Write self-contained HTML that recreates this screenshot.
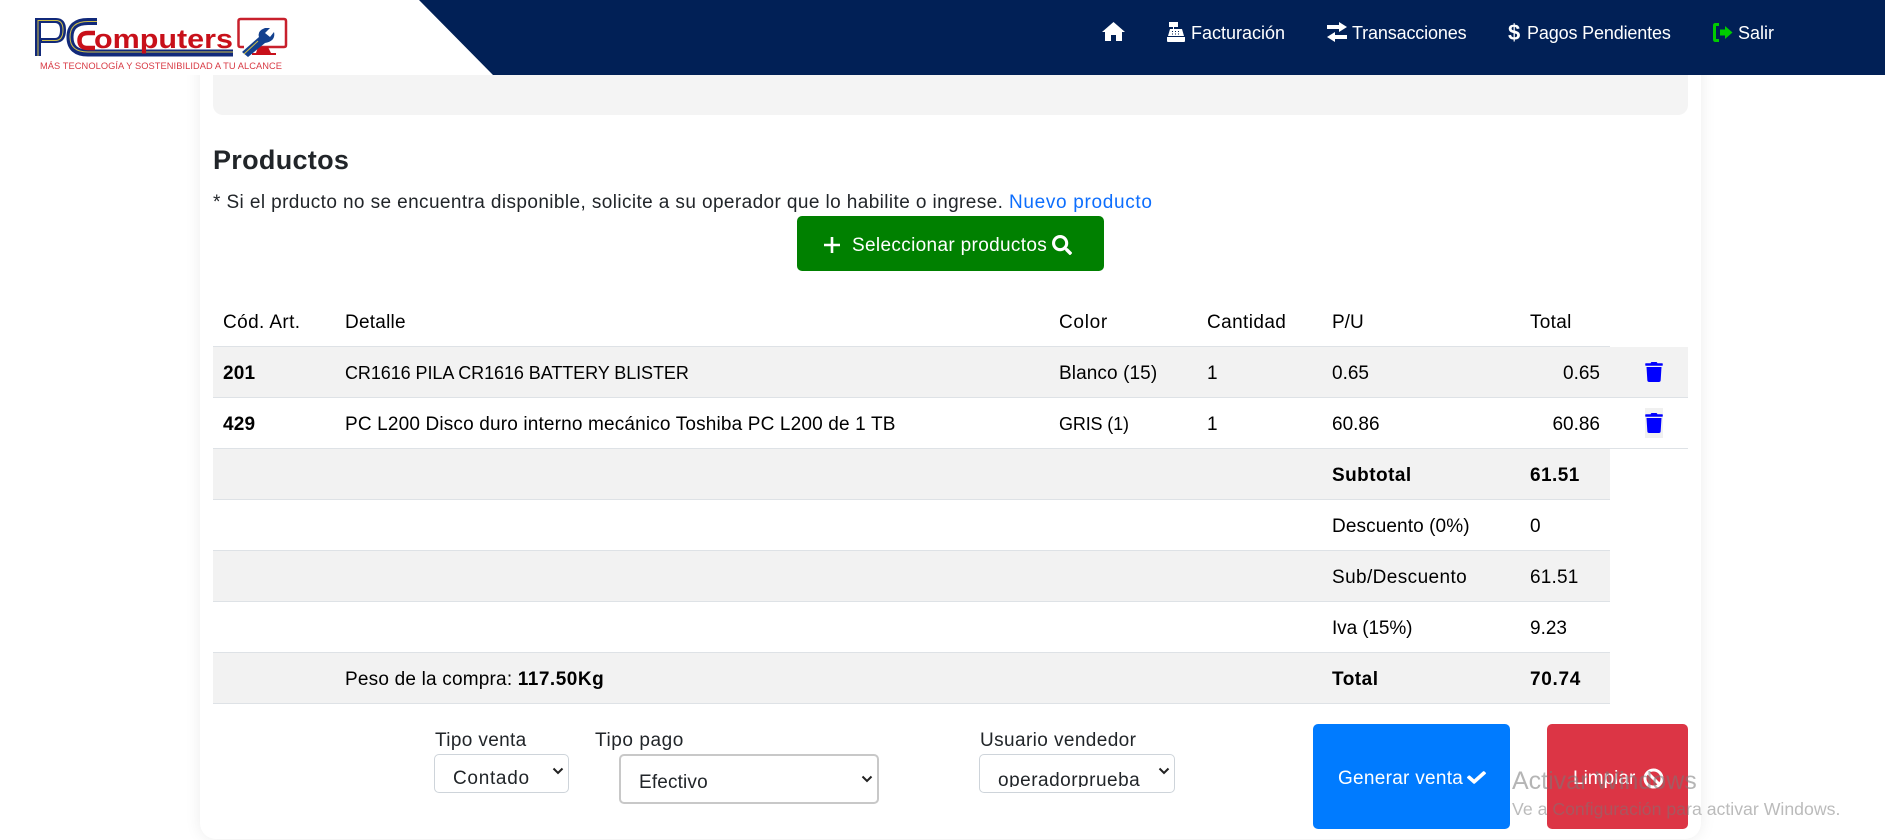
<!DOCTYPE html>
<html lang="es"><head><meta charset="utf-8"><title>PC Computers</title>
<style>
html,body{margin:0;padding:0;width:1885px;height:840px;overflow:hidden;background:#fff;font-family:"Liberation Sans",sans-serif;color:#000}
.a{position:absolute}
.t{position:absolute;white-space:nowrap;line-height:24px;font-size:19px}
.b{font-weight:700}
.nav{color:#fff;top:21px;font-size:18px}
.row{position:absolute;left:213px;height:50px;border-bottom:1px solid #dee2e6}
select{position:absolute;appearance:none;-webkit-appearance:none;background:#fff;font:19px "Liberation Sans",sans-serif;color:#212529;box-sizing:border-box;margin:0;outline:none}
</style></head><body>

<div class="a" style="left:200px;top:0;width:1501px;height:839px;background:#fff;border-radius:0 0 16px 16px;box-shadow:0 0 16px rgba(0,0,0,.08)"></div>
<div class="a" style="left:213px;top:60px;width:1475px;height:55px;background:#f4f4f4;border-radius:0 0 10px 10px"></div>

<div class="a" style="left:0;top:0;width:1885px;height:75px;background:#fff"></div>
<svg class="a" style="left:0;top:0" width="1885" height="75"><polygon points="419,0 1885,0 1885,75 493,75" fill="#012056"/></svg>

<svg class="a" style="left:30px;top:14px" width="262" height="60" viewBox="30 14 262 60">
 <path fill-rule="evenodd" d="M35 18H56Q66 18 66 30Q66 43 55 43H41V56H35ZM41 23V38H55Q60 38 60 30Q60 23 55 23Z" fill="#11297a"/>
 <path d="M38 56V20.500H56Q63 20.500 63 30Q63 40.500 55 40.500H42" fill="none" stroke="#cfc04a" stroke-width="1"/>
 <path d="M97 21.500H88Q70 21.500 70 37Q70 53 88 53H233" fill="none" stroke="#11297a" stroke-width="7"/>
 <path d="M97 21.500H88Q70 21.500 70 37Q70 52 88 52H233" fill="none" stroke="#cfc04a" stroke-width="1"/>
 <path d="M95 33H88Q79.500 33 79.500 40.500Q79.500 48 88 48H95" fill="none" stroke="#c8101a" stroke-width="4.500"/>
 <text x="94" y="48" font-family="Liberation Sans" font-weight="700" font-size="27" fill="#c8101a" textLength="139" lengthAdjust="spacingAndGlyphs">omputers</text>
 <path d="M244 47H240.500Q238.500 47 238.500 45V21Q238.500 19 240.500 19H284Q286 19 286 21V45Q286 47 284 47H256" fill="none" stroke="#c8202c" stroke-width="2.500"/>
 <path d="M258 47h10l3 6h5v2h-24v-2h4z" fill="#c8101a"/>
 <path d="M242 52L259 37Q257 31 265 28L270 28L265 33L270 37L274 32Q276 41 265 43L248 57Z" fill="#13408e"/>
 <path d="M244 54L258 41" stroke="#cfc04a" stroke-width="1"/>
 <text x="40" y="69" font-family="Liberation Sans" font-size="9.300" fill="#d83a44" textLength="242" lengthAdjust="spacing">MÁS TECNOLOGÍA Y SOSTENIBILIDAD A TU ALCANCE</text>
</svg>

<svg class="a" style="left:1102px;top:22px" width="23" height="19" viewBox="0 0 23 19"><path d="M11.500 0L23 10h-3v9h-6v-6H9v6H3v-9H0z" fill="#fff"/></svg>
<svg class="a" style="left:1166px;top:22px" width="20" height="20" viewBox="0 0 20 20"><path d="M3 0h9v5H8v2h8l2 7H2L4 7h3V5H3zM1 15h18v4q0 1-1 1H2q-1 0-1-1z" fill="#fff"/><path d="M6 9.500h1M9 9.500h1M12 9.500h1M6 12h1M9 12h1M12 12h1" stroke="#012056"/></svg>
<div class="t nav" style="left:1191px">Facturación</div>
<svg class="a" style="left:1327px;top:22px" width="20" height="20" viewBox="0 0 20 20"><path d="M0 3h12V0l8 5-8 5V7H0zM20 13H8v-3l-8 5 8 5v-3h12z" fill="#fff"/></svg>
<div class="t nav" style="left:1352px;letter-spacing:-.15px">Transacciones</div>
<div class="t nav b" style="left:1508px;font-size:22px">$</div>
<div class="t nav" style="left:1527px;letter-spacing:-.15px">Pagos Pendientes</div>
<svg class="a" style="left:1713px;top:23px" width="20" height="19" viewBox="0 0 20 19"><path d="M6 1.500H2.500Q1.500 1.500 1.500 2.500V16.500Q1.500 17.500 2.500 17.500H6" fill="none" stroke="#0c0" stroke-width="3"/><path d="M7 6.500h5V3l7.500 6.500L12 16v-3.500H7z" fill="#0c0"/></svg>
<div class="t nav" style="left:1738px">Salir</div>

<div class="t" style="left:213px;top:142px;font-size:27px;line-height:36px;font-weight:700;color:#212529;letter-spacing:.3px">Productos</div>
<div class="t" style="left:213px;top:191px;color:#212529;letter-spacing:.4px">* Si el prducto no se encuentra disponible, solicite a su operador que lo habilite o ingrese. <a style="color:#0d6efd;text-decoration:none;letter-spacing:.68px">Nuevo producto</a></div>

<div class="a" style="left:797px;top:216px;width:307px;height:55px;background:#008000;border-radius:5px"></div>
<svg class="a" style="left:823px;top:236px" width="18" height="18"><path d="M9 1v16M1 9h16" stroke="#fff" stroke-width="2.600"/></svg>
<div class="t" style="left:852px;top:234px;color:#fff;letter-spacing:.34px">Seleccionar productos</div>
<svg class="a" style="left:1052px;top:235px" width="20" height="20" viewBox="0 0 512 512"><path fill="#fff" d="M505 442.700L405.300 343c-4.500-4.500-10.600-7-17-7H372c27.600-35.300 44-79.700 44-128C416 93.100 322.900 0 208 0S0 93.100 0 208s93.100 208 208 208c48.300 0 92.700-16.400 128-44v16.300c0 6.400 2.500 12.500 7 17l99.700 99.700c9.400 9.400 24.600 9.400 33.900 0l28.300-28.300c9.400-9.400 9.400-24.600.1-34zM208 336c-70.700 0-128-57.200-128-128 0-70.700 57.200-128 128-128 70.700 0 128 57.200 128 128 0 70.700-57.200 128-128 128z"/></svg>

<div class="a" style="left:213px;top:346px;width:1397px;height:1px;background:#dee2e6"></div>
<div class="t" style="left:223px;top:311px;letter-spacing:.39px">Cód. Art.</div>
<div class="t" style="left:345px;top:311px;letter-spacing:.24px">Detalle</div>
<div class="t" style="left:1059px;top:311px;letter-spacing:.7px">Color</div>
<div class="t" style="left:1207px;top:311px;letter-spacing:.4px">Cantidad</div>
<div class="t" style="left:1332px;top:311px">P/U</div>
<div class="t" style="left:1530px;top:311px;letter-spacing:.3px">Total</div>

<div class="row" style="top:347px;width:1475px;background:#f2f2f2"></div>
<div class="row" style="top:398px;width:1475px;background:#fff"></div>
<div class="row" style="top:449px;width:1397px;background:#f2f2f2"></div>
<div class="row" style="top:500px;width:1397px;background:#fff"></div>
<div class="row" style="top:551px;width:1397px;background:#f2f2f2"></div>
<div class="row" style="top:602px;width:1397px;background:#fff"></div>
<div class="row" style="top:653px;width:1397px;background:#f2f2f2"></div>

<div class="t b" style="left:223px;top:362px;letter-spacing:.2px">201</div>
<div class="t" style="left:345px;top:361px;font-size:18px;letter-spacing:-.07px">CR1616 PILA CR1616 BATTERY BLISTER</div>
<div class="t" style="left:1059px;top:362px;letter-spacing:.1px">Blanco (15)</div>
<div class="t" style="left:1207px;top:362px">1</div>
<div class="t" style="left:1332px;top:362px">0.65</div>
<div class="t" style="right:285px;top:362px">0.65</div>
<svg class="a" style="left:1645px;top:362px" width="18" height="20" viewBox="0 0 448 512"><path fill="#00f" d="M432 32H312l-9.400-18.700A24 24 0 0 0 281.100 0H166.800a23.720 23.720 0 0 0-21.400 13.300L136 32H16A16 16 0 0 0 0 48v32a16 16 0 0 0 16 16h416a16 16 0 0 0 16-16V48a16 16 0 0 0-16-16zM53.200 467a48 48 0 0 0 47.900 45h245.800a48 48 0 0 0 47.900-45L416 128H32z"/></svg>

<div class="t b" style="left:223px;top:413px;letter-spacing:.2px">429</div>
<div class="t" style="left:345px;top:413px;letter-spacing:.16px">PC L200 Disco duro interno mecánico Toshiba PC L200 de 1 TB</div>
<div class="t" style="left:1059px;top:412px;font-size:18px;letter-spacing:-.15px">GRIS (1)</div>
<div class="t" style="left:1207px;top:413px">1</div>
<div class="t" style="left:1332px;top:413px">60.86</div>
<div class="t" style="right:285px;top:413px">60.86</div>
<div class="a" style="left:1645px;top:408px;width:18px;height:30px;background:#f0f0f0"></div>
<svg class="a" style="left:1645px;top:413px" width="18" height="20" viewBox="0 0 448 512"><path fill="#00f" d="M432 32H312l-9.400-18.700A24 24 0 0 0 281.100 0H166.800a23.720 23.720 0 0 0-21.400 13.300L136 32H16A16 16 0 0 0 0 48v32a16 16 0 0 0 16 16h416a16 16 0 0 0 16-16V48a16 16 0 0 0-16-16zM53.200 467a48 48 0 0 0 47.900 45h245.800a48 48 0 0 0 47.900-45L416 128H32z"/></svg>

<div class="t b" style="left:1332px;top:464px;letter-spacing:.45px">Subtotal</div><div class="t b" style="left:1530px;top:464px;letter-spacing:.45px">61.51</div>
<div class="t" style="left:1332px;top:515px;letter-spacing:.1px">Descuento (0%)</div><div class="t" style="left:1530px;top:515px">0</div>
<div class="t" style="left:1332px;top:566px;letter-spacing:.4px">Sub/Descuento</div><div class="t" style="left:1530px;top:566px;letter-spacing:.2px">61.51</div>
<div class="t" style="left:1332px;top:617px;letter-spacing:-.1px">Iva (15%)</div><div class="t" style="left:1530px;top:617px">9.23</div>
<div class="t" style="left:345px;top:668px;letter-spacing:.2px">Peso de la compra: <b style="letter-spacing:.5px">117.50Kg</b></div>
<div class="t b" style="left:1332px;top:668px;letter-spacing:.5px">Total</div><div class="t b" style="left:1530px;top:668px;letter-spacing:.7px">70.74</div>

<div class="t" style="left:435px;top:729px;color:#212529;letter-spacing:.36px">Tipo venta</div>
<div class="t" style="left:595px;top:729px;color:#212529;letter-spacing:.57px">Tipo pago</div>
<div class="t" style="left:980px;top:729px;color:#212529;letter-spacing:.4px">Usuario vendedor</div>

<select style="left:434px;top:754px;width:135px;height:39px;border:1px solid #ced4da;border-radius:5px;padding:10px 0 0 18px;letter-spacing:.7px"><option>Contado</option></select>
<select style="left:619px;top:754px;width:260px;height:50px;border:2px solid #c8c8c8;border-radius:5px;padding:6px 0 0 18px;letter-spacing:.15px"><option>Efectivo</option></select>
<select style="left:979px;top:754px;width:196px;height:39px;border:1px solid #ced4da;border-radius:5px;padding:14px 0 0 18px;letter-spacing:.5px"><option>operadorprueba</option></select>
<div class="a" style="left:985px;top:787px;width:170px;height:4px;background:#fff"></div>
<svg class="a" style="left:552px;top:767px" width="12" height="8"><path d="M1.500 1.500L6 6l4.500-4.500" fill="none" stroke="#222" stroke-width="2"/></svg>
<svg class="a" style="left:861px;top:775px" width="12" height="8"><path d="M1.500 1.500L6 6l4.500-4.500" fill="none" stroke="#222" stroke-width="2"/></svg>
<svg class="a" style="left:1158px;top:767px" width="12" height="8"><path d="M1.500 1.500L6 6l4.500-4.500" fill="none" stroke="#222" stroke-width="2"/></svg>

<div class="a" style="left:1313px;top:724px;width:197px;height:105px;background:#007bff;border-radius:5px"></div>
<div class="t" style="left:1338px;top:767px;color:#fff;letter-spacing:.28px">Generar venta</div>
<svg class="a" style="left:1467px;top:769px" width="19" height="17" viewBox="0 0 512 512" preserveAspectRatio="none"><path fill="#fff" d="M173.898 439.404l-166.400-166.400c-9.997-9.997-9.997-26.206 0-36.204l36.203-36.204c9.997-9.998 26.207-9.998 36.204 0L192 312.690 432.095 72.596c9.997-9.997 26.207-9.997 36.204 0l36.203 36.204c9.997 9.997 9.997 26.206 0 36.204l-294.400 294.401c-9.998 9.997-26.207 9.997-36.204-.001z"/></svg>

<div class="a" style="left:1547px;top:724px;width:141px;height:105px;background:#dc3545;border-radius:5px"></div>
<div class="t" style="left:1573px;top:767px;color:#fff">Limpiar</div>
<svg class="a" style="left:1643px;top:768px" width="21" height="21"><circle cx="10.500" cy="10.500" r="8.500" fill="none" stroke="#fff" stroke-width="3"/><path d="M4.500 4.500l12 12" stroke="#fff" stroke-width="3"/></svg>

<div class="t" style="left:1512px;top:767px;font-size:25px;line-height:28px;color:rgba(120,120,120,.55)">Activar Windows</div>
<div class="t" style="left:1512px;top:797px;font-size:17.700px;color:rgba(120,120,120,.5)">Ve a Configuración para activar Windows.</div>

</body></html>
